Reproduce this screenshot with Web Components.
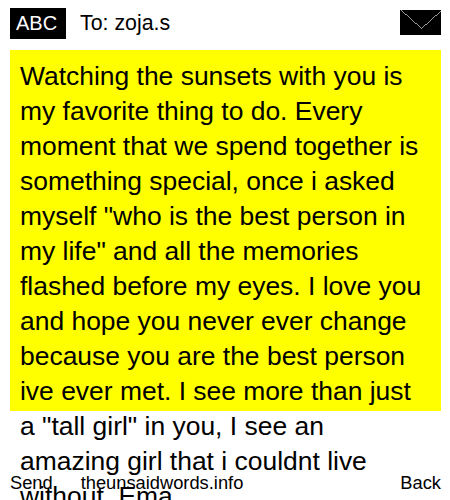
<!DOCTYPE html>
<html><head><meta charset="utf-8"><style>
html,body{margin:0;height:500px;overflow:hidden;background:#fff}
body{font-family:"Liberation Sans",Arial,sans-serif;color:#000;position:relative}
</style></head><body>
<sms-header to="To: zoja.s"></sms-header>
<sms-message>Watching the sunsets with you is my favorite thing to do. Every moment that we spend together is something special, once i asked myself "who is the best person in my life" and all the memories flashed before my eyes. I love you and hope you never ever change because you are the best person ive ever met. I see more than just a "tall girl" in you, I see an amazing girl that i couldnt live without. Ema</sms-message>
<sms-softkeys></sms-softkeys>
<script>
class SmsHeader extends HTMLElement{constructor(){super();this.attachShadow({mode:'open'}).innerHTML=`<style>
:host{display:flex;align-items:flex-start;padding:8px 9px 0 10px;height:50px;box-sizing:border-box}
.abc{background:#000;color:#fff;width:56px;height:31px;box-sizing:border-box;padding-left:6px;font-size:20px;line-height:31px}
.to{margin-left:14px;font-size:21.33px;line-height:31px;flex:1}
svg{display:block;margin-top:2px}
</style><div class="abc">ABC</div><div class="to">${this.getAttribute('to')}</div>
<svg width="41" height="25" viewBox="0 0 41 25" shape-rendering="crispEdges"><rect width="41" height="25" fill="#000"/><path d="M0.5 0.5L20.5 18.5L40.5 0.5" fill="none" stroke="#fff" stroke-width="0.6"/></svg>`}}
class SmsMessage extends HTMLElement{constructor(){super();this.attachShadow({mode:'open'}).innerHTML=`<style>
:host{display:block;margin:0 9px 0 10px;height:361px;box-sizing:border-box;padding:9px 10px 10px;background:#ff0;font-size:26.45px;line-height:35px}
</style><slot></slot>`}}
class SmsSoftkeys extends HTMLElement{constructor(){super();this.attachShadow({mode:'open'}).innerHTML=`<style>
:host{position:absolute;left:10px;right:9px;top:472px;display:flex;font-size:18.3px;line-height:22px}
.site{margin-left:28px;flex:1}
</style><span>Send</span><span class="site">theunsaidwords.info</span><span>Back</span>`}}
customElements.define('sms-header',SmsHeader);
customElements.define('sms-message',SmsMessage);
customElements.define('sms-softkeys',SmsSoftkeys);
</script>
</body></html>
